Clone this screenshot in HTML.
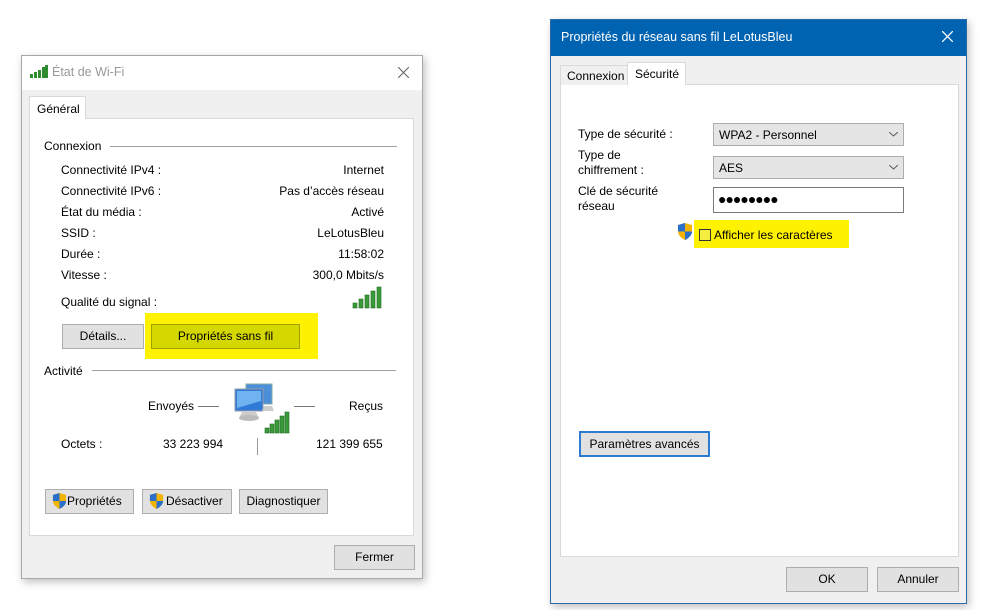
<!DOCTYPE html>
<html><head><meta charset="utf-8"><style>
*{margin:0;padding:0;box-sizing:border-box}
body{width:999px;height:610px;background:#fff;position:relative;overflow:hidden;font-family:"Liberation Sans",sans-serif;font-size:12px;color:#000}
.a{position:absolute;white-space:nowrap}
.btn{position:absolute;background:#e1e1e1;border:1px solid #adadad;text-align:center;line-height:23px}
.r{text-align:right}
.line{position:absolute;height:1px;background:#a0a0a0}
</style></head><body>

<!-- LEFT WINDOW -->
<div class="a" style="left:21px;top:55px;width:402px;height:524px;background:#f0f0f0;border:1px solid #a8a8a8;box-shadow:2px 3px 8px rgba(0,0,0,.25)"></div>
<div class="a" style="left:22px;top:56px;width:400px;height:34px;background:#fff"></div>
<svg class="a" style="left:30px;top:65px" width="18" height="13"><g fill="#2e8b2e"><rect x="0" y="9" width="3" height="4"/><rect x="4" y="7" width="3" height="6"/><rect x="8" y="5" width="3" height="8"/><rect x="12" y="2" width="3" height="11"/><rect x="15" y="0" width="3" height="13"/></g></svg>
<div class="a" style="left:52px;top:65px;color:#999;font-size:12.5px">État de Wi-Fi</div>
<svg class="a" style="left:398px;top:67px" width="11" height="11"><path d="M0 0L11 11M11 0L0 11" stroke="#666" stroke-width="1.1"/></svg>
<div class="a" style="left:29px;top:118px;width:385px;height:418px;background:#fff;border:1px solid #d9d9d9"></div>
<div class="a" style="left:29px;top:96px;width:57px;height:23px;background:#fff;border:1px solid #d9d9d9;border-bottom:none;padding:5px 0 0 7px">Général</div>

<div class="a" style="left:44px;top:139px">Connexion</div>
<div class="line" style="left:110px;top:146px;width:287px"></div>
<div class="a" style="left:61px;top:160px;line-height:21px">Connectivité IPv4 :<br>Connectivité IPv6 :<br>État du média :<br>SSID :<br>Durée :<br>Vitesse :</div>
<div class="a r" style="left:200px;width:184px;top:160px;line-height:21px">Internet<br>Pas d’accès réseau<br>Activé<br>LeLotusBleu<br>11:58:02<br>300,0 Mbits/s</div>
<div class="a" style="left:61px;top:295px">Qualité du signal :</div>
<svg class="a" style="left:352px;top:286px" width="30" height="23"><g fill="#3a9a3a" stroke="#1f6b1f" stroke-width=".6"><rect x="1" y="17" width="4" height="5"/><rect x="7" y="13" width="4" height="9"/><rect x="13" y="9" width="4" height="13"/><rect x="19" y="5" width="4" height="17"/><rect x="25" y="1" width="4" height="21"/></g></svg>

<div class="a" style="left:145px;top:313px;width:173px;height:46px;background:#fff200"></div>
<div class="btn" style="left:62px;top:324px;width:82px;height:25px">Détails...</div>
<div class="btn" style="left:151px;top:324px;width:149px;height:25px;background:#d5d800;border-color:#a0a000">Propriétés sans fil</div>

<div class="a" style="left:44px;top:364px">Activité</div>
<div class="line" style="left:92px;top:370px;width:304px"></div>
<div class="a" style="left:148px;top:399px">Envoyés</div>
<div class="line" style="left:198px;top:406px;width:21px;background:#777"></div>
<div class="line" style="left:294px;top:406px;width:21px;background:#777"></div>
<div class="a" style="left:349px;top:399px">Reçus</div>
<svg class="a" style="left:232px;top:382px" width="58" height="52">
<rect x="14" y="2" width="26" height="20" fill="#4a8fd8" stroke="#8aa" />
<rect x="3" y="7" width="28" height="22" fill="#2e7ad6" stroke="#99a"/>
<path d="M5 9h24v10L5 26z" fill="#6fb3f0"/>
<path d="M10 30h14l3 6H7z" fill="#ccc"/><ellipse cx="17" cy="36" rx="10" ry="3" fill="#bbb"/>
<path d="M32 24h8l2 5h-12z" fill="#ccc"/>
<g fill="#3a9a3a" stroke="#1f6b1f" stroke-width=".6"><rect x="33" y="46" width="4" height="5"/><rect x="38" y="42" width="4" height="9"/><rect x="43" y="38" width="4" height="13"/><rect x="48" y="34" width="4" height="17"/><rect x="53" y="30" width="4" height="21"/></g></svg>
<div class="a" style="left:61px;top:437px">Octets :</div>
<div class="a" style="left:163px;top:437px">33 223 994</div>
<div class="a" style="left:257px;top:438px;width:1px;height:17px;background:#999"></div>
<div class="a" style="left:316px;top:437px">121 399 655</div>

<svg width="0" height="0" style="position:absolute"><defs><symbol id="sh" viewBox="0 0 16 17"><path d="M8 0L15 2V8C15 12 12 15 8 17C4 15 1 12 1 8V2Z" fill="#f2b400"/><path d="M8 0L1 2V8.5H8ZM8 8.5V17C12 15 15 12 15 8.5Z" fill="#2a6fc9"/></symbol></defs></svg>
<div class="btn" style="left:45px;top:489px;width:89px;height:25px;text-align:left;padding-left:21px">Propriétés</div>
<svg class="a" style="left:52px;top:493px" width="15" height="16"><use href="#sh"/></svg>
<div class="btn" style="left:142px;top:489px;width:90px;height:25px;text-align:left;padding-left:23px">Désactiver</div>
<svg class="a" style="left:149px;top:493px" width="15" height="16"><use href="#sh"/></svg>
<div class="btn" style="left:239px;top:489px;width:89px;height:25px">Diagnostiquer</div>
<div class="btn" style="left:334px;top:545px;width:81px;height:25px">Fermer</div>

<!-- RIGHT WINDOW -->
<div class="a" style="left:550px;top:19px;width:417px;height:585px;background:#f0f0f0;border:1px solid #2a6aa8;box-shadow:2px 3px 8px rgba(0,0,0,.25)"></div>
<div class="a" style="left:551px;top:20px;width:415px;height:36px;background:#0063b1"></div>
<div class="a" style="left:561px;top:30px;color:#fff;font-size:12.5px">Propriétés du réseau sans fil LeLotusBleu</div>
<svg class="a" style="left:942px;top:31px" width="11" height="11"><path d="M0 0L11 11M11 0L0 11" stroke="#fff" stroke-width="1.3"/></svg>
<div class="a" style="left:560px;top:84px;width:399px;height:473px;background:#fff;border:1px solid #d9d9d9"></div>
<div class="a" style="left:560px;top:65px;width:68px;height:20px;background:#f0f0f0;border:1px solid #d9d9d9;border-bottom:none;padding:3px 0 0 6px">Connexion</div>
<div class="a" style="left:627px;top:62px;width:59px;height:23px;background:#fff;border:1px solid #d9d9d9;border-bottom:none;padding:4px 0 0 7px">Sécurité</div>

<div class="a" style="left:578px;top:127px">Type de sécurité :</div>
<div class="a" style="left:578px;top:148px;line-height:15px">Type de<br>chiffrement :</div>
<div class="a" style="left:578px;top:184px;line-height:15px">Clé de sécurité<br>réseau</div>
<div class="a" style="left:713px;top:123px;width:191px;height:23px;background:#e5e5e5;border:1px solid #adadad;padding:4px 0 0 5px">WPA2 - Personnel</div>
<div class="a" style="left:713px;top:156px;width:191px;height:23px;background:#e5e5e5;border:1px solid #adadad;padding:4px 0 0 5px">AES</div>
<svg class="a" style="left:889px;top:132px" width="9" height="5"><path d="M0 0L4.5 4L9 0" stroke="#555" fill="none"/></svg>
<svg class="a" style="left:889px;top:165px" width="9" height="5"><path d="M0 0L4.5 4L9 0" stroke="#555" fill="none"/></svg>
<div class="a" style="left:713px;top:187px;width:191px;height:26px;background:#fff;border:1px solid #7a7a7a;padding:3px 0 0 4px;font-size:14px;letter-spacing:-1px">●●●●●●●●</div>
<svg class="a" style="left:677px;top:223px" width="16" height="17"><use href="#sh"/></svg>
<div class="a" style="left:694px;top:220px;width:155px;height:28px;background:#fff200"></div>
<div class="a" style="left:699px;top:229px;width:12px;height:12px;border:1px solid #333;background:#f5ee40"></div>
<div class="a" style="left:714px;top:228px">Afficher les caractères</div>

<div class="btn" style="left:579px;top:431px;width:131px;height:26px;border:2px solid #2b7bd0;line-height:22px">Paramètres avancés</div>
<div class="btn" style="left:786px;top:567px;width:82px;height:25px">OK</div>
<div class="btn" style="left:877px;top:567px;width:82px;height:25px">Annuler</div>
</body></html>
